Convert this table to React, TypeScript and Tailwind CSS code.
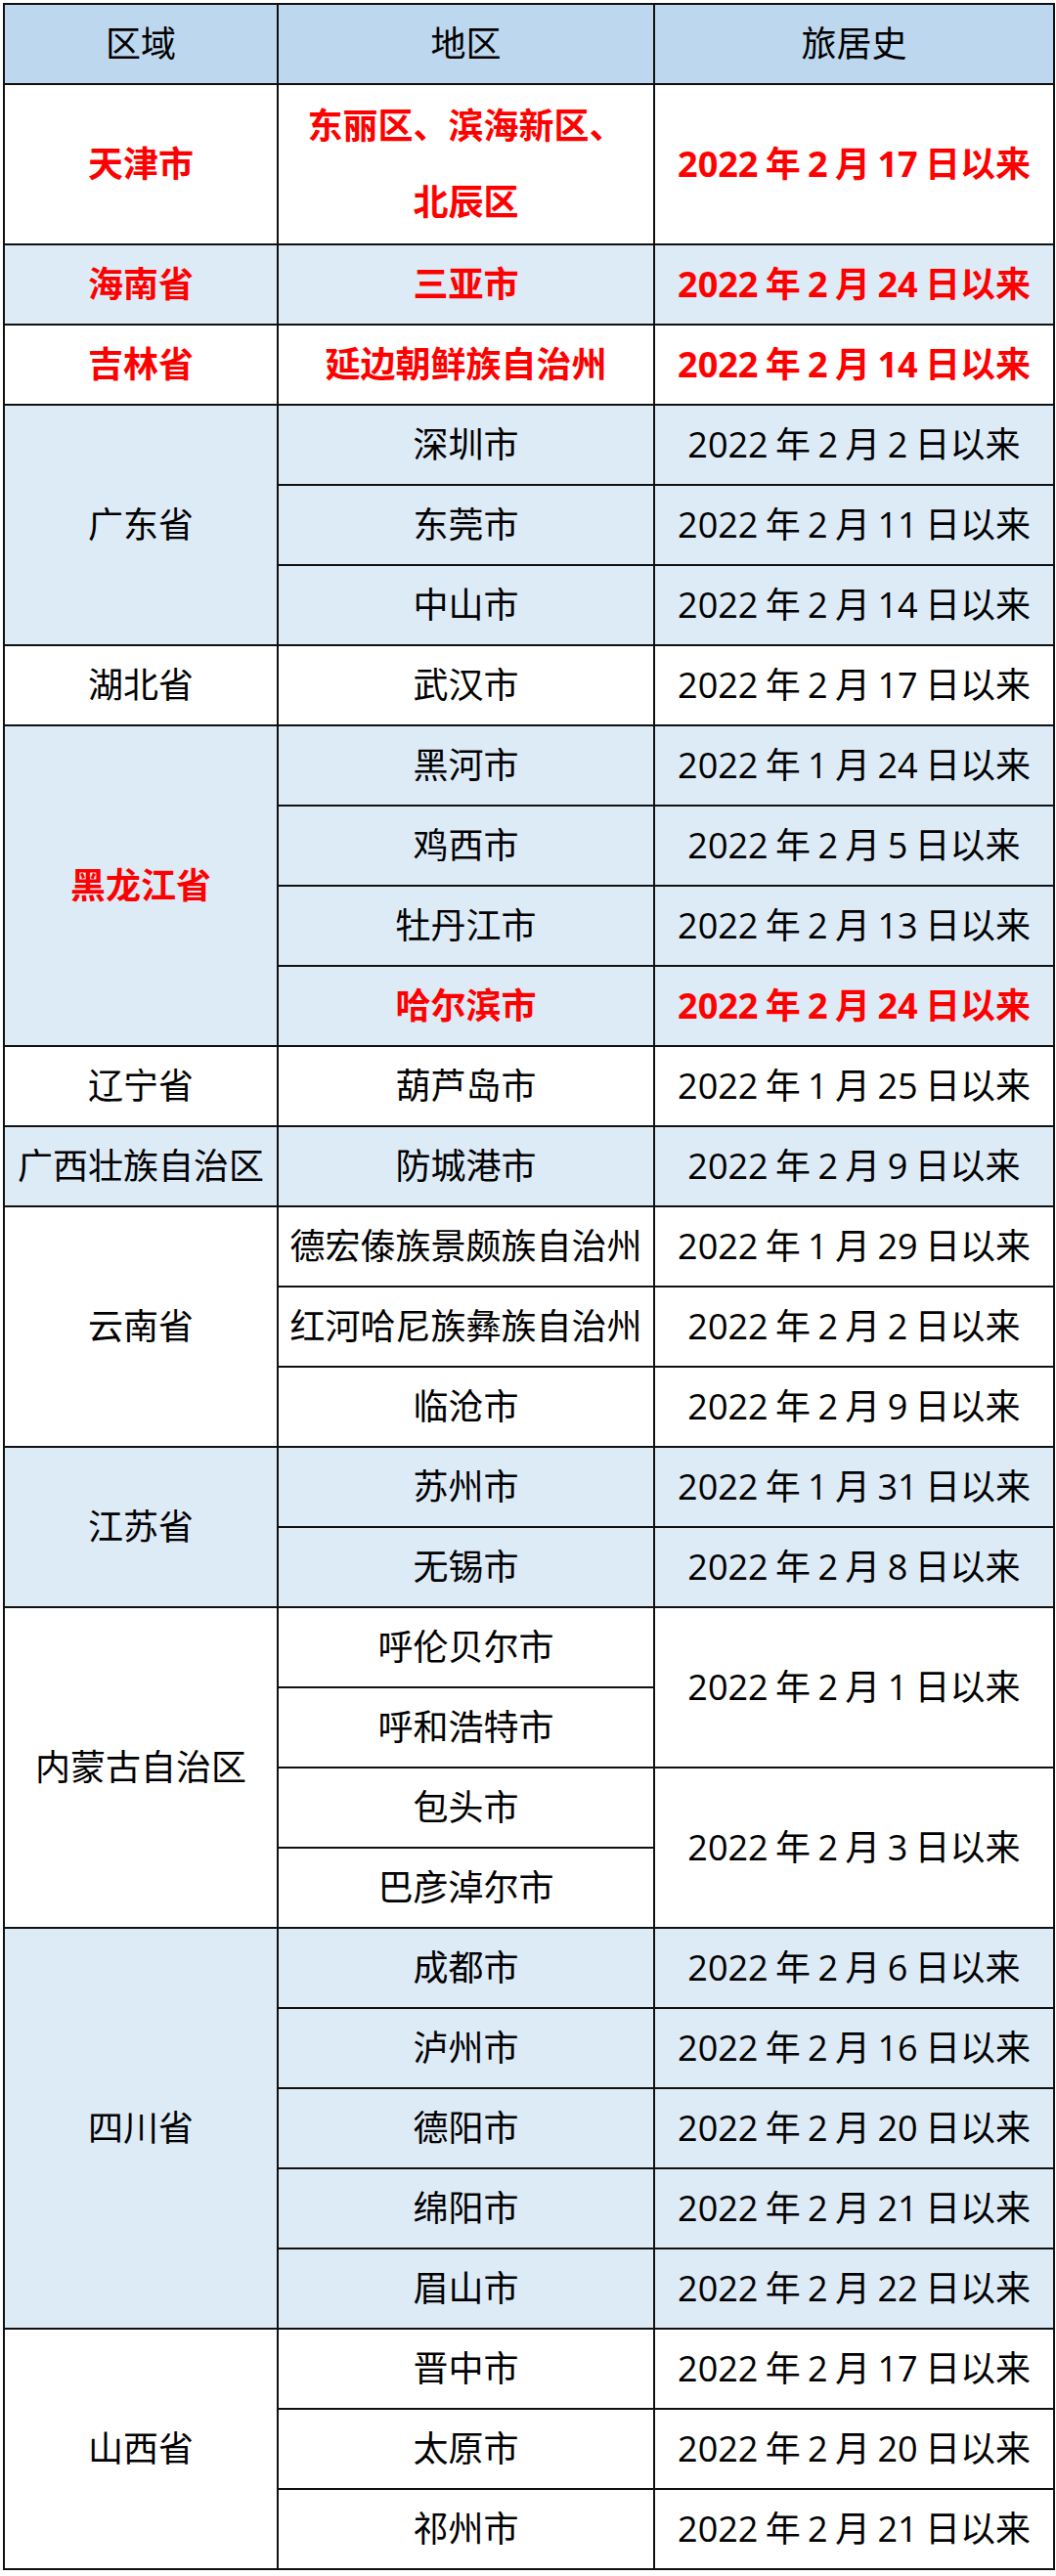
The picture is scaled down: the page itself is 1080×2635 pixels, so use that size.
import React from "react";

type Row = {
  area: React.ReactNode;
  date?: string;
  dateSpan?: number;
  red?: boolean;
  tall?: boolean;
};

type Group = {
  region: string;
  red?: boolean;
  blue: boolean;
  rows: Row[];
};

const groups: Group[] = [
  {
    region: "天津市",
    red: true,
    blue: false,
    rows: [
      {
        area: (
          <>
            东丽区、滨海新区、
            <br />
            北辰区
          </>
        ),
        date: "2022 年 2 月 17 日以来",
        red: true,
        tall: true,
      },
    ],
  },
  { region: "海南省", red: true, blue: true, rows: [{ area: "三亚市", date: "2022 年 2 月 24 日以来", red: true }] },
  { region: "吉林省", red: true, blue: false, rows: [{ area: "延边朝鲜族自治州", date: "2022 年 2 月 14 日以来", red: true }] },
  {
    region: "广东省",
    blue: true,
    rows: [
      { area: "深圳市", date: "2022 年 2 月 2 日以来" },
      { area: "东莞市", date: "2022 年 2 月 11 日以来" },
      { area: "中山市", date: "2022 年 2 月 14 日以来" },
    ],
  },
  { region: "湖北省", blue: false, rows: [{ area: "武汉市", date: "2022 年 2 月 17 日以来" }] },
  {
    region: "黑龙江省",
    red: true,
    blue: true,
    rows: [
      { area: "黑河市", date: "2022 年 1 月 24 日以来" },
      { area: "鸡西市", date: "2022 年 2 月 5 日以来" },
      { area: "牡丹江市", date: "2022 年 2 月 13 日以来" },
      { area: "哈尔滨市", date: "2022 年 2 月 24 日以来", red: true },
    ],
  },
  { region: "辽宁省", blue: false, rows: [{ area: "葫芦岛市", date: "2022 年 1 月 25 日以来" }] },
  { region: "广西壮族自治区", blue: true, rows: [{ area: "防城港市", date: "2022 年 2 月 9 日以来" }] },
  {
    region: "云南省",
    blue: false,
    rows: [
      { area: "德宏傣族景颇族自治州", date: "2022 年 1 月 29 日以来" },
      { area: "红河哈尼族彝族自治州", date: "2022 年 2 月 2 日以来" },
      { area: "临沧市", date: "2022 年 2 月 9 日以来" },
    ],
  },
  {
    region: "江苏省",
    blue: true,
    rows: [
      { area: "苏州市", date: "2022 年 1 月 31 日以来" },
      { area: "无锡市", date: "2022 年 2 月 8 日以来" },
    ],
  },
  {
    region: "内蒙古自治区",
    blue: false,
    rows: [
      { area: "呼伦贝尔市", date: "2022 年 2 月 1 日以来", dateSpan: 2 },
      { area: "呼和浩特市" },
      { area: "包头市", date: "2022 年 2 月 3 日以来", dateSpan: 2 },
      { area: "巴彦淖尔市" },
    ],
  },
  {
    region: "四川省",
    blue: true,
    rows: [
      { area: "成都市", date: "2022 年 2 月 6 日以来" },
      { area: "泸州市", date: "2022 年 2 月 16 日以来" },
      { area: "德阳市", date: "2022 年 2 月 20 日以来" },
      { area: "绵阳市", date: "2022 年 2 月 21 日以来" },
      { area: "眉山市", date: "2022 年 2 月 22 日以来" },
    ],
  },
  {
    region: "山西省",
    blue: false,
    rows: [
      { area: "晋中市", date: "2022 年 2 月 17 日以来" },
      { area: "太原市", date: "2022 年 2 月 20 日以来" },
      { area: "祁州市", date: "2022 年 2 月 21 日以来" },
    ],
  },
];

const cell = "border-2 border-[#111] text-center align-middle whitespace-nowrap p-0";

export default function App() {
  return (
    <div className="w-[1080px] h-[2635px] bg-white pt-[3px] pl-[3px] font-['Open_Sans','Noto_Sans_CJK_SC','Noto_Sans_CJK_JP',sans-serif] text-[36px] leading-[1.2] text-black">
      <table className="table-fixed border-collapse w-[1074px]">
        <colgroup>
          <col className="w-[280px]" />
          <col className="w-[385px]" />
          <col className="w-[409px]" />
        </colgroup>
        <thead>
          <tr className="h-[82px] bg-[#bdd7ee]">
            <th className={cell + " font-normal"}>区域</th>
            <th className={cell + " font-normal"}>地区</th>
            <th className={cell + " font-normal"}>旅居史</th>
          </tr>
        </thead>
        <tbody>
          {groups.map((g, gi) =>
            g.rows.map((r, ri) => (
              <tr
                key={gi + "-" + ri}
                className={(r.tall ? "h-[164px] " : "h-[82px] ") + (g.blue ? "bg-[#ddebf7]" : "bg-white")}
              >
                {ri === 0 && (
                  <td
                    rowSpan={g.rows.length}
                    className={cell + (g.red ? " font-bold text-[#ff0000]" : "")}
                  >
                    {g.region}
                  </td>
                )}
                <td
                  className={
                    cell +
                    (r.red ? " font-bold text-[#ff0000]" : "") +
                    (r.tall ? " leading-[78px]" : "")
                  }
                >
                  {r.area}
                </td>
                {r.date !== undefined && (
                  <td
                    rowSpan={r.dateSpan ?? 1}
                    className={cell + " [word-spacing:-2px]" + (r.red ? " font-bold text-[#ff0000]" : "")}
                  >
                    {r.date}
                  </td>
                )}
              </tr>
            ))
          )}
        </tbody>
      </table>
    </div>
  );
}
